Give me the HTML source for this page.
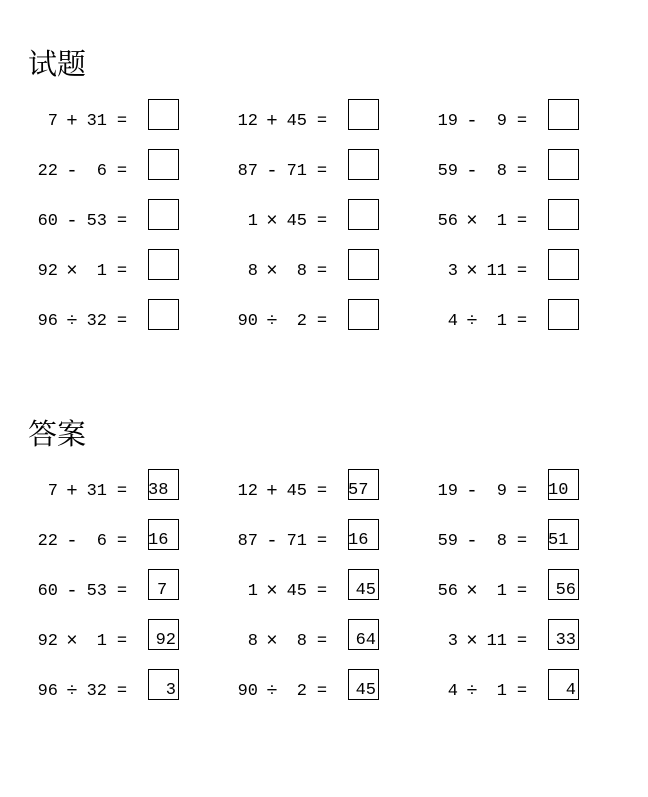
<!DOCTYPE html>
<html><head><meta charset="utf-8"><style>
body{margin:0;width:648px;height:797px;background:#fff;position:relative;font-family:"Liberation Mono","Noto Sans CJK SC",monospace;color:#000}
.t{position:absolute;left:28px;font:29px "Liberation Serif","Noto Serif CJK SC",serif;line-height:1}
.s{position:absolute;font-size:17px;line-height:20px;white-space:pre}
.r{text-align:right}
.c{text-align:center}
.o{font-size:19px}
.b{position:absolute;width:29px;height:29px;border:1px solid #000}
.b span{position:absolute;bottom:-2px;font-size:17px;line-height:20px}
</style></head><body>
<div class="t" style="top:51px">试题</div>
<div class="t" style="top:421px">答案</div>
<div id="g"></div>
<script>
var q=[["7","+","31","38"],["12","+","45","57"],["19","-","9","10"],
["22","-","6","16"],["87","-","71","16"],["59","-","8","51"],
["60","-","53","7"],["1","×","45","45"],["56","×","1","56"],
["92","×","1","92"],["8","×","8","64"],["3","×","11","33"],
["96","÷","32","3"],["90","÷","2","45"],["4","÷","1","4"]];
var left={"38":1,"57":1,"10":1,"16":1,"51":1};
var h="";
[0,370].forEach(function(off,sec){
q.forEach(function(e,i){
var col=i%3,row=Math.floor(i/3),x=col*200,y=off+112+row*50;
h+='<div class="s r" style="left:'+(x+18)+'px;width:40px;top:'+y+'px">'+e[0]+'</div>';
h+='<div class="s c o" style="left:'+(x+62)+'px;width:20px;top:'+(y-1)+'px">'+e[1]+'</div>';
h+='<div class="s r" style="left:'+(x+67)+'px;width:40px;top:'+y+'px">'+e[2]+'</div>';
h+='<div class="s c" style="left:'+(x+112)+'px;width:20px;top:'+y+'px">=</div>';
var sp='';
if(sec){var st=left[e[3]]?'left:-1px':(e[3]=="7"?'left:8px':'right:2px');sp='<span style="'+st+'">'+e[3]+'</span>';}
h+='<div class="b" style="left:'+(x+148)+'px;top:'+(off+99+row*50)+'px">'+sp+'</div>';
});});
document.getElementById("g").innerHTML=h;
</script>
</body></html>
